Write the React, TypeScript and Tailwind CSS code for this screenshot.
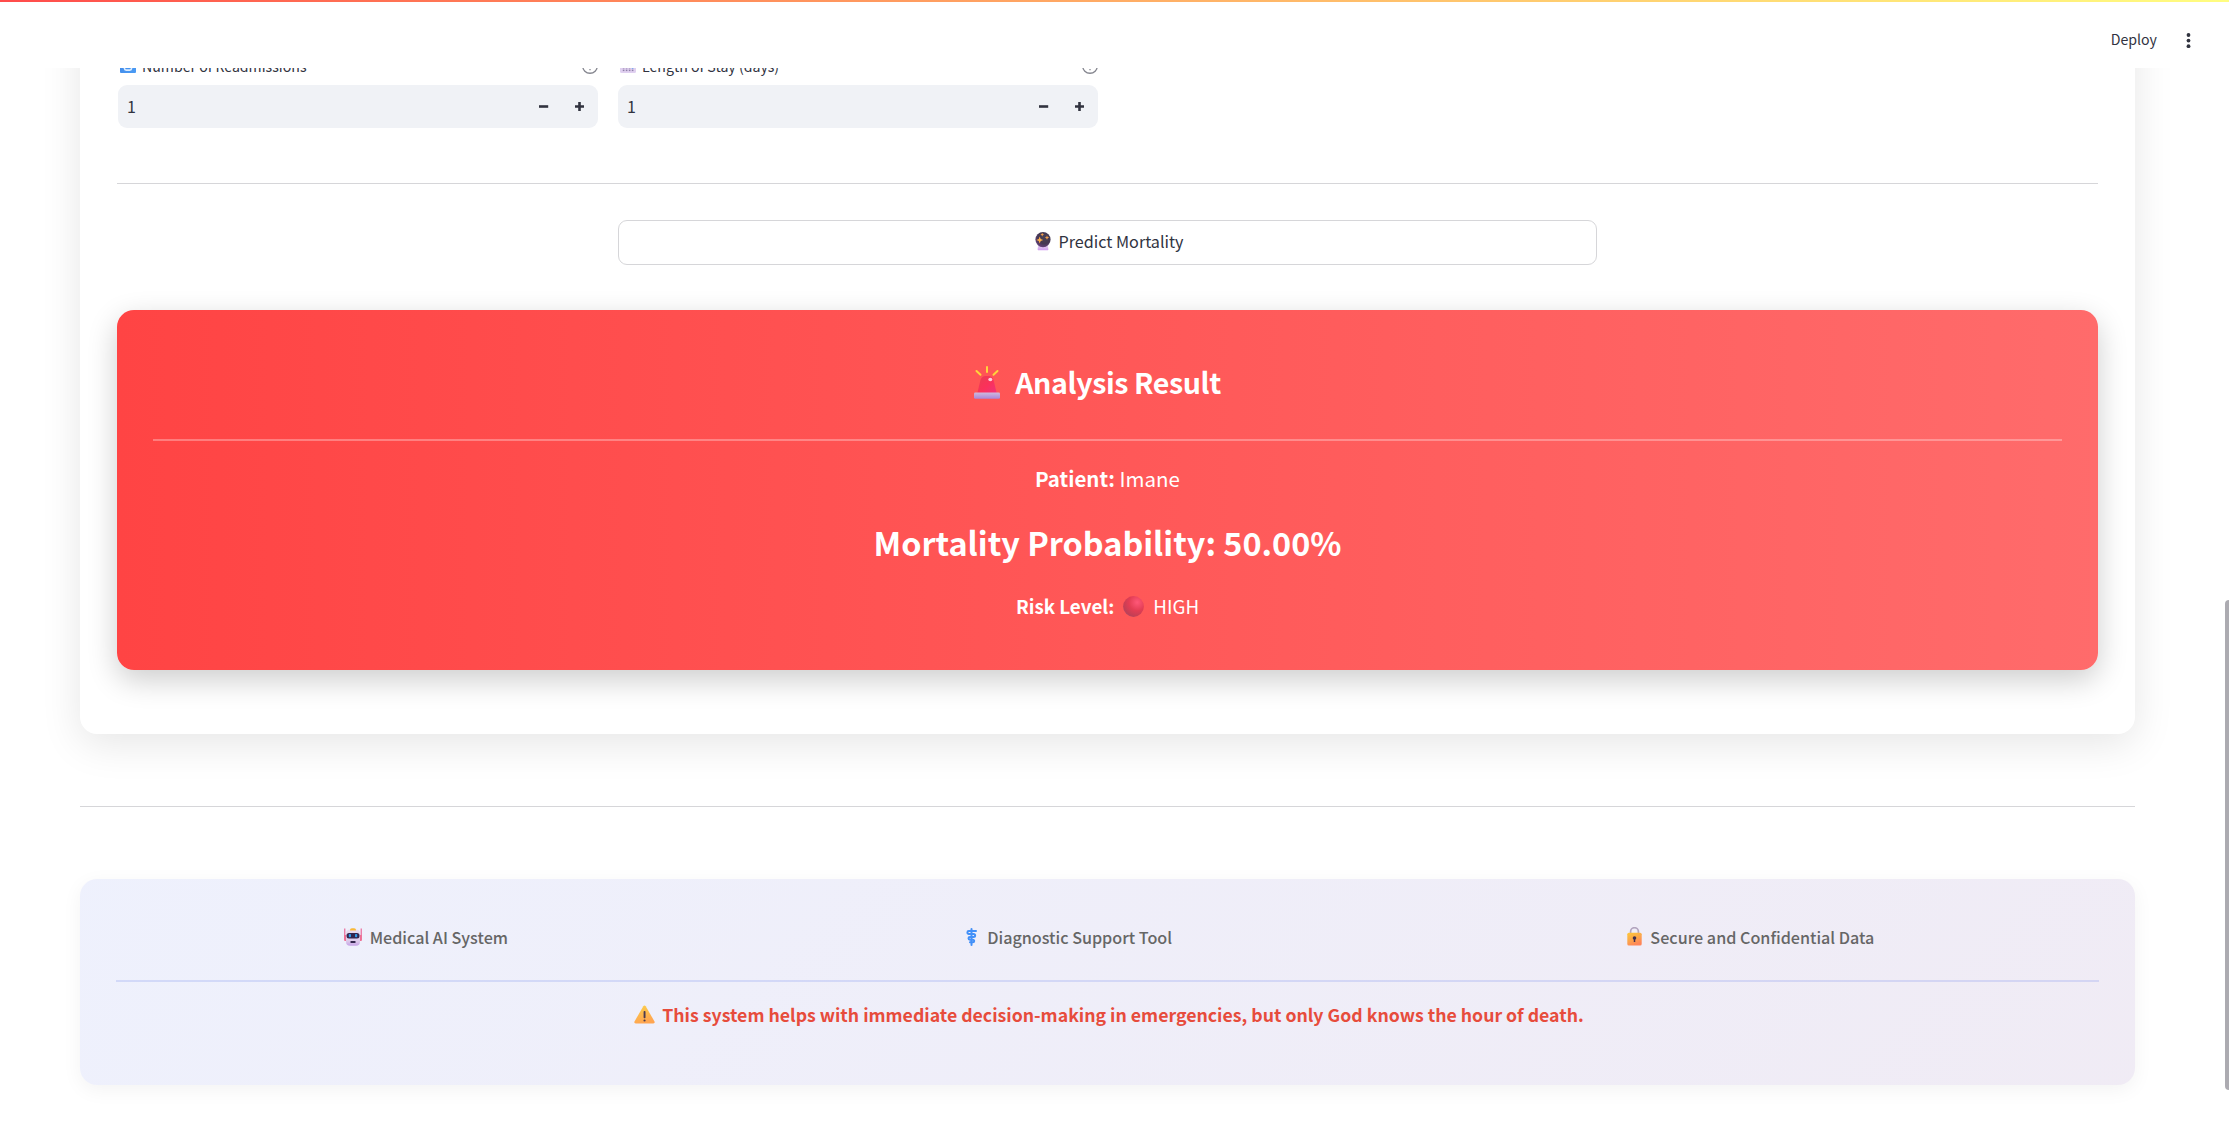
import type { ReactNode } from 'react';

function CycleIcon() {
  return (
    <svg className="h-4 w-4" viewBox="0 0 16 16" fill="none">
      <defs>
        <linearGradient id="cy" x1="0" y1="0" x2="1" y2="1">
          <stop stopColor="#3f86e6" />
          <stop offset="1" stopColor="#4b9cf5" />
        </linearGradient>
      </defs>
      <rect width="16" height="16" rx="1" fill="url(#cy)" />
      <path d="M4.500 9.500v2c0 1 .8 1.600 1.700 1.600h3.600c1 0 1.700-.7 1.700-1.600V8M9.500 9.800l2-2 2 2" stroke="#dcecff" strokeWidth="1.600" />
    </svg>
  );
}

function CalendarIcon() {
  const cells = [2.8, 5.8, 8.8, 11.8];
  return (
    <svg className="h-4 w-4" viewBox="0 0 16 16">
      <rect width="16" height="16" rx="1.500" fill="#e0d0f0" />
      <rect width="16" height="5" rx="1.500" fill="#ef4668" />
      {cells.map((x) => (
        <g key={x} fill="#8f80a8">
          <rect x={x} y="7.400" width="1.600" height="1.500" />
          <rect x={x} y="10" width="1.600" height="1.500" fill={x === 11.8 ? '#1f8af0' : '#8f80a8'} />
          <rect x={x} y="12.600" width="1.600" height="1.500" />
        </g>
      ))}
    </svg>
  );
}

function HelpIcon() {
  return (
    <svg className="h-4 w-4" viewBox="0 0 16 16" fill="none" stroke="#85868f" strokeWidth="1.400">
      <circle cx="8" cy="8" r="7.300" />
      <path d="M6 6.200a2 2 0 1 1 2.800 1.900c-.6.300-.8.600-.8 1.200" />
      <path d="M8 11v1.300" strokeWidth="1.300" />
    </svg>
  );
}

function CrystalBallIcon() {
  return (
    <svg className="h-[19px] w-4" viewBox="0 0 16 19">
      <defs>
        <radialGradient id="cb" cx=".6" cy=".35" r=".7">
          <stop stopColor="#4a4356" />
          <stop offset=".6" stopColor="#443852" />
          <stop offset="1" stopColor="#66427f" />
        </radialGradient>
        <linearGradient id="cbb" x1="0" y1="0" x2="0" y2="1">
          <stop stopColor="#e6d8f0" />
          <stop offset="1" stopColor="#cf9bf0" />
        </linearGradient>
      </defs>
      <path d="M3.200 13h9.600l.6 4.300c0 .7-.4 1-1 1H3.600c-.6 0-1-.3-1-1z" fill="url(#cbb)" />
      <circle cx="8" cy="7.600" r="7.600" fill="url(#cb)" />
      <path d="M4.700 4.600l1 2.300 2.500 1.100-2.500 1-1 2.500-1-2.500-2.300-1 2.300-1.100z" fill="#ffae4a" />
      <path d="M12 3.400l.7 1.500 1.600.7-1.600.7-.7 1.500-.7-1.500-1.500-.7 1.500-.7zM7.200.8l.6 1.200 1.300.6-1.300.6-.6 1.200-.6-1.200-1.200-.6 1.200-.6z" fill="#f3a04c" />
    </svg>
  );
}

function SirenIcon() {
  return (
    <svg className="h-[33px] w-[26px]" viewBox="0 0 26 33">
      <defs>
        <linearGradient id="sr" x1="0" y1="0" x2="1" y2="1">
          <stop stopColor="#e83f52" />
          <stop offset=".5" stopColor="#fb3159" />
          <stop offset="1" stopColor="#f0327a" />
        </linearGradient>
        <linearGradient id="srb" x1="0" y1="0" x2="0" y2="1">
          <stop stopColor="#cfb9dc" />
          <stop offset="1" stopColor="#ab86d8" />
        </linearGradient>
      </defs>
      <path d="M13 1v5M2.500 5l4 3.700M23.500 5l-4 3.700" stroke="#ffd43c" strokeWidth="2" strokeLinecap="round" />
      <path d="M3.200 27.500L6.500 14c.8-2.700 2.700-4 5-4h3c2.300 0 4.200 1.300 5 4l3.300 13.500z" fill="url(#sr)" />
      <ellipse cx="16.300" cy="13.500" rx="2" ry="1.700" fill="#ffd0dc" />
      <rect y="26.500" width="26" height="6.200" rx="1.300" fill="url(#srb)" />
    </svg>
  );
}

function RedBallIcon() {
  return (
    <svg className="h-[21px] w-[21px]" viewBox="0 0 21 21">
      <defs>
        <radialGradient id="rb" cx=".68" cy=".3" r=".8">
          <stop stopColor="#ff5878" />
          <stop offset=".5" stopColor="#e33d54" />
          <stop offset=".85" stopColor="#c33f55" />
          <stop offset="1" stopColor="#a84a68" />
        </radialGradient>
      </defs>
      <circle cx="10.500" cy="10.500" r="10.400" fill="url(#rb)" />
    </svg>
  );
}

function RobotIcon() {
  return (
    <svg className="h-[18px] w-[18px]" viewBox="0 0 18 18">
      <defs>
        <linearGradient id="ro" x1="0" y1="0" x2="0" y2="1">
          <stop stopColor="#e9dff0" />
          <stop offset=".7" stopColor="#dccbea" />
          <stop offset="1" stopColor="#c6a2e6" />
        </linearGradient>
      </defs>
      <path d="M.8.500v12M17.200.500v12" stroke="#ea4f86" strokeWidth="1" />
      <path d="M.300 7h2v6h-1a1 1 0 0 1-1-1zM17.700 7h-2v6h1a1 1 0 0 0 1-1z" fill="#ee6f93" />
      <rect x="2" y="1.500" width="14" height="16.300" rx="4" fill="url(#ro)" />
      <path d="M6 2.500C6 1 6.700.300 8 .300h2c1.300 0 2 .700 2 2.200z" fill="#f9b937" />
      <rect x="2.500" y="5" width="13" height="5.500" rx="2.500" fill="#33264d" />
      <rect x="4.800" y="6" width="2.200" height="3.300" rx=".8" fill="#2f9bea" />
      <rect x="11" y="6" width="2.200" height="3.300" rx=".8" fill="#2f9bea" />
      <rect x="6.500" y="13" width="5" height="2" rx=".5" fill="#33264d" />
    </svg>
  );
}

function MedicalIcon() {
  return (
    <svg className="h-[18px] w-[11px]" viewBox="0 0 11 18" fill="none" stroke="#4290f8" strokeLinecap="round">
      <path d="M5.500 1v16" strokeWidth="2" />
      <path d="M10 2.900H2.800C1 2.900.900 5.900 2.800 5.900h4.700c2.200 0 2.200 3 0 3H4c-2 0-2 2.800 0 2.800h2.800c1.900 0 1.800 2.500 0 2.500H4" strokeWidth="2" />
    </svg>
  );
}

function LockIcon() {
  return (
    <svg className="h-[19px] w-[15px]" viewBox="0 0 15 19">
      <defs>
        <linearGradient id="lk" x1="0" y1="0" x2=".5" y2="1">
          <stop stopColor="#ffc839" />
          <stop offset=".5" stopColor="#fbaa4a" />
          <stop offset="1" stopColor="#ff8558" />
        </linearGradient>
      </defs>
      <path d="M3.600 7V4.600a3.900 3.900 0 0 1 7.800 0V7" fill="none" stroke="#b3a5bf" strokeWidth="1.700" />
      <rect x=".300" y="5.700" width="14.400" height="12.800" rx="1.500" fill="url(#lk)" />
      <circle cx="7.500" cy="11" r="1.800" fill="#3f2d4f" />
      <path d="M7.500 11v4" stroke="#3f2d4f" strokeWidth="1.500" />
    </svg>
  );
}

function WarningIcon() {
  return (
    <svg className="h-[19px] w-[21px]" viewBox="0 0 21 19">
      <defs>
        <linearGradient id="wn" x1="0" y1="0" x2=".3" y2="1">
          <stop stopColor="#fbd04a" />
          <stop offset="1" stopColor="#ffa550" />
        </linearGradient>
      </defs>
      <path d="M9.300 1.300c.6-1 1.800-1 2.400 0l8.800 15.200c.5 1-.1 1.900-1.200 1.900H1.700c-1.100 0-1.700-.9-1.200-1.900z" fill="url(#wn)" />
      <rect x="9.600" y="6" width="1.900" height="7.300" rx=".8" fill="#4a3a50" />
      <circle cx="10.550" cy="15.500" r="1.100" fill="#4a3a50" />
    </svg>
  );
}

function NumberField({ icon, label }: { icon: ReactNode; label: string }) {
  return (
    <div>
      <div className="flex h-[21px] items-center pl-[2px] text-[14.150px] leading-[21px]">
        <span className="mt-[-1px]">{icon}</span>
        <span className="mt-[2px] ml-[6px] flex-1">{label}</span>
        <HelpIcon />
      </div>
      <div className="mt-[9px] flex h-[43px] items-center rounded-[9px] bg-[#f0f2f6] pl-[9px] text-[16px]">
        <span className="mt-[-1px] flex-1">1</span>
        <svg className="h-9 w-9" viewBox="0 0 36 36" stroke="#31333f" strokeWidth="2.600">
          <path d="M13 17.500h9.200" />
        </svg>
        <svg className="h-9 w-9" viewBox="0 0 36 36" stroke="#31333f" strokeWidth="2.600">
          <path d="M13 17.500h9M17.500 13v9" />
        </svg>
      </div>
    </div>
  );
}

function FooterItem({ icon, spacing, children }: { icon: ReactNode; spacing: string; children: ReactNode }) {
  return (
    <div className={`flex items-center ${spacing}`}>
      {icon}
      <span>{children}</span>
    </div>
  );
}

export default function App() {
  return (
    <div className="relative h-[1140px] overflow-hidden bg-white pr-[94px] pl-20 font-['Noto_Sans_CJK_SC','Open_Sans',sans-serif] text-[#31333f]">
      <header className="absolute inset-x-0 top-0 z-10 h-[68px] bg-white">
        <div className="h-[2px] bg-gradient-to-r from-[#ff4b4b] to-[#fffd80]" />
        <div className="flex h-[75px] items-center justify-end pr-[38px] text-[14.150px]">
          <span>Deploy</span>
          <svg className="ml-[29px] h-4 w-[5px]" viewBox="0 0 5 16" fill="#31333f">
            <circle cx="2.500" cy="3" r="1.900" />
            <circle cx="2.500" cy="8.600" r="1.900" />
            <circle cx="2.500" cy="14.200" r="1.900" />
          </svg>
        </div>
      </header>

      <main className="h-[734px] w-[2055px] rounded-b-[17px] bg-white px-[37px] pt-[55px] shadow-[0_10px_40px_rgba(0,0,0,0.1)]">
        <div className="ml-px grid grid-cols-4 gap-5">
          <NumberField icon={<CycleIcon />} label="Number of Readmissions" />
          <NumberField icon={<CalendarIcon />} label="Length of Stay (days)" />
        </div>
        <div className="mt-[55px] h-px bg-[#d6d6d9]" />
        <div className="flex justify-center">
          <button className="mt-9 flex h-[45px] w-[979px] items-center justify-center gap-[8px] rounded-[9px] border border-[#d6d6d9] pb-[2px] pl-[3px] text-[16.150px]">
            <CrystalBallIcon />
            Predict Mortality
          </button>
        </div>

        <section className="mt-[45px] flex h-[360px] flex-col rounded-[17px] bg-[linear-gradient(90deg,#ff4444,#ff6b6b)] px-9 pt-[51px] text-center text-white shadow-[0_10px_30px_rgba(0,0,0,0.2)]">
          <h2 className="flex h-[43px] items-center justify-center gap-[15px] pr-5 text-[28.600px] font-bold tracking-[-0.4px]">
            <SirenIcon />
            Analysis Result
          </h2>
          <div className="mt-[35px] h-[2px] bg-white/30" />
          <p className="mt-[22px] h-[30px] text-[20.500px] leading-[30px]">
            <strong>Patient:</strong> Imane
          </p>
          <p className="mt-[29px] h-10 text-[32.400px] leading-10 font-bold">Mortality Probability: 50.00%</p>
          <p className="mt-[29px] flex h-[30px] items-center justify-center text-[18.800px] leading-[30px]">
            <strong>Risk Level:</strong>
            <span className="mr-[9px] ml-[9px]"><RedBallIcon /></span>
            HIGH
          </p>
        </section>
      </main>

      <div className="mt-[72px] h-px w-[2055px] bg-[#d6d6d9]" />

      <footer className="mt-[72px] h-[206px] w-[2055px] rounded-[17px] bg-[linear-gradient(135deg,rgba(102,126,234,0.11),rgba(118,75,162,0.11))] px-9 pt-[43px] shadow-[0_5px_20px_rgba(0,0,0,0.05)]">
        <div className="flex h-[30px] items-center justify-around text-[16.150px] font-medium text-[#666666]">
          <FooterItem icon={<RobotIcon />} spacing="gap-[8px]">Medical AI System</FooterItem>
          <FooterItem icon={<MedicalIcon />} spacing="gap-[10px] ml-[3px] mr-[-3px]">Diagnostic Support Tool</FooterItem>
          <FooterItem icon={<LockIcon />} spacing="gap-[8px] ml-[3px] mr-[-3px]">Secure and Confidential Data</FooterItem>
        </div>
        <div className="mt-7 h-[2px] bg-[#667eea]/20" />
        <p className="mt-[17px] flex h-[31px] items-center justify-center gap-[7px] pl-[3px] text-[17.700px] font-bold text-[#e74c3c]">
          <WarningIcon />
          This system helps with immediate decision-making in emergencies, but only God knows the hour of death.
        </p>
      </footer>

      <div className="absolute top-[600px] right-0 h-[490px] w-1 rounded-l-sm bg-[#acabb1]" />
    </div>
  );
}
